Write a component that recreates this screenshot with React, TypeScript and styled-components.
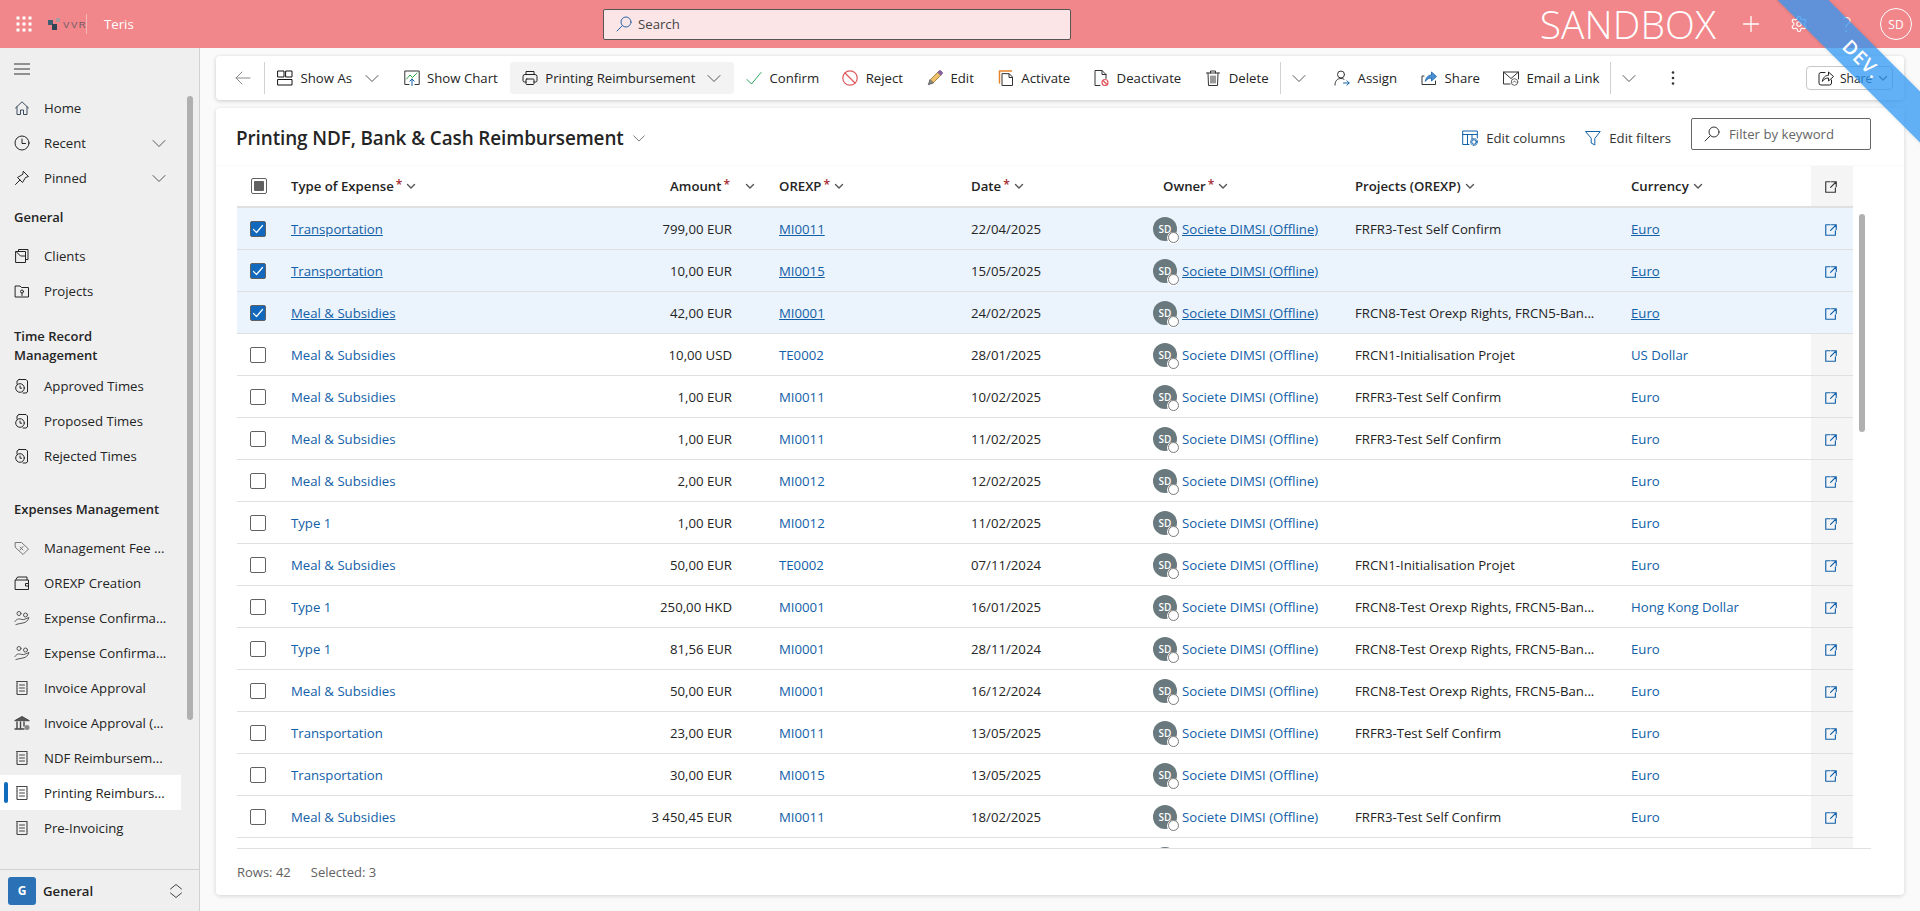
import React from "react";
import styled, { createGlobalStyle } from "styled-components";

const FONT = `"Open Sans", "Noto Sans", "Liberation Sans", sans-serif`;
const COLS = "43px 296px 191px 192px 192px 193px 276px 191px 42px";
const LINK = "#1160a8";

const Global = createGlobalStyle`
  html, body { margin: 0; height: 100%; overflow: hidden; }
  body { font-family: ${FONT}; font-size: 13.2px; color: #242424; background: #fafafa; }
  #root { height: 100%; }
  * { box-sizing: border-box; }
`;

const Page = styled.div`
  position: relative;
  height: 911px;
  display: grid;
  grid-template-rows: 48px 1fr;
  overflow: hidden;
`;

/* ---------- top bar ---------- */
const TopBar = styled.header`
  background: #f1878a;
  display: flex;
  align-items: center;
  color: #fff;
  padding-left: 16px;
`;
const LogoBox = styled.div`
  display: flex;
  align-items: center;
  height: 20px;
  width: 39px;
  margin-left: 16px;
  border-right: 1px solid #f6b5b6;
`;
const LogoText = styled.span`
  font-size: 9.5px;
  letter-spacing: 1.6px;
  color: #6f5a68;
  font-family: "Liberation Sans", sans-serif;
  margin-left: 1px;
`;
const AppName = styled.span`
  margin-left: 17px;
  font-size: 13.2px;
  width: 499px;
`;
const SearchBox = styled.div`
  width: 468px;
  height: 31px;
  background: #fbe5e6;
  border: 1px solid #555;
  border-radius: 2px;
  display: flex;
  align-items: center;
  padding-left: 12px;
  gap: 6px;
  color: #444;
`;
const SandboxLabel = styled.span`
  margin-left: auto;
  font-size: 39px;
  font-weight: 300;
  line-height: 48px;
  letter-spacing: 0.1px;
`;
const TopIconSlot = styled.div<{ $first?: boolean }>`
  width: 48px;
  display: flex;
  justify-content: center;
  align-items: center;
  font-size: 20px;
  font-weight: 300;
  margin-left: ${(p) => (p.$first ? 11 : 0)}px;
`;
const UserBadge = styled.div`
  width: 32px;
  height: 32px;
  border: 1px solid #fff;
  border-radius: 50%;
  display: flex;
  align-items: center;
  justify-content: center;
  font-size: 12px;
  margin: 0 8px 0 9px;
`;

/* ---------- ribbon ---------- */
const RibbonClip = styled.div`
  position: absolute;
  top: 0;
  right: 0;
  width: 200px;
  height: 150px;
  overflow: hidden;
  pointer-events: none;
`;
const Ribbon = styled.div`
  position: absolute;
  left: -8px;
  top: 40.5px;
  width: 300px;
  height: 36px;
  transform: rotate(45deg);
  background: rgba(45, 150, 241, 0.75);
  color: #fff;
  font-size: 19px;
  font-weight: 600;
  line-height: 36px;
  text-align: center;
  letter-spacing: 1px;
  box-shadow: 0 0 4px rgba(0, 0, 0, 0.12);
`;

/* ---------- sidebar ---------- */
const Shell = styled.div`
  display: grid;
  grid-template-columns: 200px 1fr;
  min-height: 0;
`;
const Side = styled.aside`
  position: relative;
  background: #efefef;
  border-right: 1px solid #d1d1d1;
  display: flex;
  flex-direction: column;
  overflow: hidden;
`;
const SideNav = styled.nav`
  flex: 1;
  display: flex;
  flex-direction: column;
`;
const BurgerRow = styled.div`
  height: 42px;
  display: flex;
  align-items: center;
  padding-left: 14px;
`;
const SideItem = styled.div<{ $active?: boolean }>`
  position: relative;
  height: 35px;
  width: 181px;
  flex: none;
  display: flex;
  align-items: center;
  padding: 0 14px;
  background: ${(p) => (p.$active ? "#fff" : "transparent")};
  white-space: nowrap;
  &::before {
    content: "";
    display: ${(p) => (p.$active ? "block" : "none")};
    position: absolute;
    left: 4px;
    top: 7px;
    width: 4px;
    height: 21px;
    border-radius: 2px;
    background: #0f6cbd;
  }
`;
const SideLabel = styled.span`
  margin-left: 14px;
  flex: 1;
`;
const SectionTitle = styled.div<{ $top: number; $bottom: number }>`
  padding: ${(p) => p.$top}px 30px ${(p) => p.$bottom}px 14px;
  font-weight: 600;
  line-height: 19px;
  font-size: 13px;
`;
const SideScroll = styled.div`
  position: absolute;
  left: 187px;
  top: 48px;
  width: 6px;
  height: 624px;
  border-radius: 3px;
  background: #b0b0b0;
`;
const AreaSwitch = styled.div`
  height: 42px;
  border-top: 1px solid #d1d1d1;
  display: flex;
  align-items: center;
  padding: 0 15px 0 8px;
  font-weight: 600;
`;
const AreaTile = styled.div`
  width: 28px;
  height: 28px;
  border-radius: 3px;
  background: #2a72b5;
  color: #fff;
  font-size: 12px;
  font-weight: 700;
  display: flex;
  align-items: center;
  justify-content: center;
  margin-right: 7px;
`;
const AreaLabel = styled.span`
  flex: 1;
`;

/* ---------- main ---------- */
const Main = styled.main`
  padding: 8px 16px 16px;
  display: flex;
  flex-direction: column;
  gap: 8px;
  min-height: 0;
`;
const Toolbar = styled.div`
  height: 44px;
  flex: none;
  background: #fff;
  border-radius: 4px;
  box-shadow: 0 1px 4px rgba(0, 0, 0, 0.2);
  display: flex;
  align-items: center;
  padding: 0 11px;
`;
const ToolBtn = styled.div<{ $pressed?: boolean; $pad?: number; $padRight?: number }>`
  height: 32px;
  display: flex;
  align-items: center;
  gap: 7.5px;
  padding: 0 ${(p) => p.$padRight ?? p.$pad ?? 12}px 0 ${(p) => p.$pad ?? 12}px;
  border-radius: 4px;
  white-space: nowrap;
  background: ${(p) => (p.$pressed ? "#f3f3f3" : "transparent")};
`;
const TrailChevron = styled.span<{ $gap: number }>`
  margin-left: ${(p) => p.$gap}px;
  display: flex;
`;
const ToolSep = styled.div`
  width: 1px;
  height: 32px;
  background: #d1d1d1;
  flex: none;
`;
const ShareBox = styled.div`
  margin-left: auto;
  height: 24px;
  width: 87px;
  border: 1px solid #c8c8c8;
  border-radius: 4px;
  display: flex;
  align-items: center;
  gap: 6px;
  padding-left: 11px;
  font-size: 12px;
`;

const Card = styled.section`
  position: relative;
  flex: 1;
  min-height: 0;
  background: #fff;
  border-radius: 4px;
  box-shadow: 0 1px 4px rgba(0, 0, 0, 0.16);
  display: flex;
  flex-direction: column;
`;
const CardHead = styled.div`
  height: 58px;
  flex: none;
  display: flex;
  align-items: center;
  padding: 2px 33px 0 20px;
  border-bottom: 1px solid #fafafa;
`;
const Title = styled.h1`
  margin: 1px 8px 0 0;
  font-size: 18.9px;
  font-weight: 600;
  letter-spacing: -0.1px;
`;
const HeadAction = styled.div`
  display: flex;
  align-items: center;
  gap: 8px;
  margin-right: 20px;
  white-space: nowrap;
  color: #333;
`;
const FilterBox = styled.div`
  width: 180px;
  height: 32px;
  border: 1px solid #666;
  border-radius: 2px;
  display: flex;
  align-items: center;
  gap: 9px;
  padding-left: 12px;
  color: #666;
  margin-bottom: 7px;
  white-space: nowrap;
`;
const Actions = styled.div`
  margin-left: auto;
  display: flex;
  align-items: center;
`;
const TableWrap = styled.div`
  flex: 1;
  min-height: 0;
  margin: 0 33px 0 21px;
  overflow: hidden;
  border-bottom: 1px solid #e0e0e0;
`;
const HeadRow = styled.div`
  display: grid;
  grid-template-columns: ${COLS};
  height: 42px;
  width: 1616px;
  border-bottom: 2px solid #e0e0e0;
  font-weight: 600;
`;
const Row = styled.div<{ $sel?: boolean }>`
  display: grid;
  grid-template-columns: ${COLS};
  height: 42px;
  width: 1616px;
  border-bottom: 1px solid #e0e0e0;
  background: ${(p) => (p.$sel ? "#ebf3fc" : "#fff")};
`;
const Cell = styled.div<{ $pad?: number; $right?: boolean; $gray?: boolean }>`
  display: flex;
  align-items: center;
  min-width: 0;
  white-space: nowrap;
  padding-left: ${(p) => p.$pad ?? 12}px;
  justify-content: ${(p) => (p.$right ? "flex-end" : "flex-start")};
  padding-right: ${(p) => (p.$right ? 35 : 0)}px;
  background: ${(p) => (p.$gray ? "#f5f5f5" : "transparent")};
`;
const OpenCell = styled(Cell)`
  padding-top: 2px;
`;
const Star = styled.span`
  color: #a4262c;
  margin: 0 4px 0 2px;
  font-size: 12px;
  position: relative;
  top: -2px;
`;
const AmountHead = styled.span`
  margin-right: -23px;
  display: flex;
  align-items: center;
`;
const SortGap = styled.span<{ $gap: number }>`
  margin-left: ${(p) => p.$gap}px;
  display: flex;
`;
const Link = styled.a<{ $sel?: boolean }>`
  color: ${LINK};
  text-decoration: ${(p) => (p.$sel ? "underline" : "none")};
`;
const Box = styled.div<{ $checked?: boolean }>`
  width: 16px;
  height: 16px;
  border-radius: 2px;
  border: 1px solid #616161;
  background: ${(p) => (p.$checked ? "#1168bc" : "#fff")};
  display: flex;
  align-items: center;
  justify-content: center;
`;
const MixedMark = styled.div`
  width: 10px;
  height: 10px;
  border-radius: 1px;
  background: #616161;
`;
const Avatar = styled.div`
  position: relative;
  width: 24px;
  height: 24px;
  border-radius: 50%;
  background: #69797e;
  color: #fff;
  font-size: 10px;
  font-weight: 600;
  display: flex;
  align-items: center;
  justify-content: center;
  margin-right: 5px;
  flex: none;
`;
const Presence = styled.div`
  position: absolute;
  right: -2px;
  bottom: -3px;
  width: 12px;
  height: 12px;
  border-radius: 50%;
  background: #fff;
  display: flex;
  align-items: center;
  justify-content: center;
  &::after {
    content: "";
    width: 9px;
    height: 9px;
    border-radius: 50%;
    border: 1px solid #7a7a7a;
  }
`;
const CardFoot = styled.div`
  height: 46px;
  flex: none;
  display: flex;
  align-items: center;
  padding-left: 21px;
  gap: 20px;
  color: #616161;
  font-size: 13px;
`;
const TableScroll = styled.div`
  position: absolute;
  left: 1643px;
  top: 106px;
  width: 6px;
  height: 218px;
  border-radius: 3px;
  background: #b0b0b0;
`;

/* ---------- icons ---------- */
const Svg = styled.svg<{ $s?: number }>`
  width: ${(p) => p.$s ?? 16}px;
  height: ${(p) => p.$s ?? 16}px;
  flex: none;
  fill: none;
  stroke: currentColor;
  stroke-width: 1;
  stroke-linecap: round;
  stroke-linejoin: round;
  display: block;
`;
type IP = { s?: number; c?: string; children?: React.ReactNode };
const Ic = ({ s = 16, c, children }: IP) => (
  <Svg $s={s} viewBox="0 0 16 16" style={c ? { color: c } : undefined}>
    {children}
  </Svg>
);
const Chevron = ({ s = 16, c = "#555" }: { s?: number; c?: string }) => (
  <Ic s={s} c={c}>
    <path d="M2 5.5 8 11.5 14 5.5" />
  </Ic>
);
const SmallChevron = () => (
  <Svg $s={10} viewBox="0 0 10 10" style={{ color: "#555", strokeWidth: 1.4 }}>
    <path d="M1.5 3.5 5 7 8.5 3.5" />
  </Svg>
);
const OpenIcon = ({ c = LINK }: { c?: string }) => (
  <Ic s={14} c={c}>
    <path d="M7 2H2v12h11V9" strokeWidth="1.3" />
    <path d="M8.5 2H14v5.5M14 2 7.5 8.5" strokeWidth="1.3" />
  </Ic>
);
const SearchGlyph = ({ c }: { c: string }) => (
  <Ic s={16} c={c}>
    <circle cx="10" cy="6" r="5" />
    <path d="M6.4 9.6 1 15" />
  </Ic>
);
const Waffle = () => (
  <Svg $s={16} viewBox="0 0 16 16" style={{ fill: "#fff", stroke: "none" }}>
    {[0, 6, 12].flatMap((y) =>
      [0, 6, 12].map((x) => <rect key={`${x}-${y}`} x={x + 0.5} y={y + 0.5} width="3" height="3" />)
    )}
  </Svg>
);
const LogoMark = () => (
  <Svg $s={14} viewBox="0 0 14 14" style={{ stroke: "none" }}>
    <rect x="0" y="3" width="5" height="5" fill="#3f5f74" />
    <rect x="4" y="7" width="5" height="6" fill="#2f4454" />
    <rect x="8" y="1" width="4" height="4" fill="#a89a9e" />
  </Svg>
);
const Home = () => (
  <Ic c="#3a4a5c"><path d="M1.5 8 8 1.8 14.5 8M3 6.8V14.5h3.5V10h3v4.5H13V6.8" /></Ic>
);
const Clock = () => (
  <Ic><circle cx="8" cy="8" r="7" /><path d="M8 4v4.5h3.5" /></Ic>
);
const Pin = () => (
  <Ic><path d="M9.5 1.5 14.5 6.5 11.5 7.5 8.5 12.5 3.5 7.5 8.5 4.5ZM6 10 1.5 14.5" /></Ic>
);
const Clients = () => (
  <Ic><path d="M2 3.5h9.5v11H2zM4.5 3.5v-2h9.5v10h-2.5M2 3.5l4.5 4.5h5" /></Ic>
);
const Folder = () => (
  <Ic><path d="M1.5 3h4.5l1.5 1.5h7V14h-13z" /><circle cx="8" cy="8.5" r="1.5" /><path d="M8 10v2.5" /></Ic>
);
const TimeDoc = () => (
  <Ic>
    <path d="M5 1.5h7l1.5 1.5v11l-1.5 1H9M3 6V3l2-1.5" />
    <circle cx="6" cy="10" r="4.3" />
    <path d="M6 8v2.2h1.6" />
  </Ic>
);
const Tag = () => (
  <Ic c="#777">
    <path d="M1.5 2.5h6l7 6.5-5.5 5.5-7.5-7z" />
    <path d="M6 7l3 3M9 6.5 6 10" />
  </Ic>
);
const Wallet = () => (
  <Ic>
    <path d="M2 4.5 3.5 2h9.5v3M1.5 5h13v9.5h-13z" />
    <path d="M14.5 8.5h-3v2.5h3" />
  </Ic>
);
const Hands = () => (
  <Ic c="#555">
    <circle cx="5" cy="3.5" r="2" />
    <circle cx="11.5" cy="5" r="2" />
    <path d="M1 11.5c2-3.5 5-2.5 7-2 2 .5 4-1 7-2-1 3-3 5-6 5.5-3 .5-5 1-7 1.5" />
  </Ic>
);
const Receipt = () => (
  <Ic c="#444">
    <path d="M3 1.5h10v13H3z" strokeDasharray="1.4 .3" />
    <path d="M5.5 5h5M5.5 8h5M5.5 11h5" />
  </Ic>
);
const Bank = () => (
  <Ic c="#444">
    <path d="M1 5.5 8 1.5 15 5.5z" fill="#555" />
    <path d="M3 7v6M6.5 7v6M10 7v4M1 14h9" strokeWidth="1.4" />
    <circle cx="13" cy="12.5" r="2.5" fill="#888" stroke="none" />
  </Ic>
);

const IconShowAs = () => (
  <Ic c="#111">
    <rect x="1" y="1" width="6" height="6" />
    <rect x="9" y="1" width="6" height="6" />
    <rect x="1" y="9.5" width="14" height="5.5" />
  </Ic>
);
const IconChart = () => (
  <Ic c="#333">
    <path d="M5 14.5H.8V1h14.4v13.5H11" />
    <path d="M2.5 9 6 5l2.5 2.5L13 3" stroke="#2ca34a" />
    <path d="M8 15.5V9M5.8 11.2 8 9l2.2 2.2" stroke="#1160a8" />
  </Ic>
);
const IconPrint = () => (
  <Ic c="#222">
    <path d="M4 4.5V1.5h8v3M4 12H2.5A1.5 1.5 0 0 1 1 10.5v-4A2 2 0 0 1 3 4.5h10a2 2 0 0 1 2 2v4a1.5 1.5 0 0 1-1.5 1.5H12" />
    <rect x="4" y="9" width="8" height="5.5" rx=".8" />
  </Ic>
);
const IconCheck = () => (
  <Ic c="#2fa35c"><path d="M1 9.5 5.5 14 15 2.5" /></Ic>
);
const IconReject = () => (
  <Ic c="#e2585c">
    <circle cx="8" cy="8" r="7.2" strokeWidth="1.2" />
    <path d="M3 3l10 10" strokeWidth="1.2" />
  </Ic>
);
const IconEdit = () => (
  <Ic c="#777">
    <path d="M3 10 11 2l3 3-8 8z" fill="#eec16a" stroke="#a98a4a" />
    <path d="M11 2l1.3-1.2a1 1 0 0 1 1.4 0l1.5 1.5a1 1 0 0 1 0 1.4L14 5z" fill="#8a63a8" stroke="#7a5a98" />
    <path d="M3 10l-1.7 4.7L6 13z" fill="#888" stroke="#666" />
  </Ic>
);
const IconActivate = () => (
  <Ic c="#333">
    <path d="M1.5 13V1h12" stroke="#e8822a" strokeWidth="1.5" />
    <path d="M4 4v11.5h10.5V7l-3-3zM11 4v3.5h3.5" />
  </Ic>
);
const IconDeactivate = () => (
  <Ic c="#333">
    <path d="M7 15.5H2V.5h7l4 4v4M9 .5v4h4" />
    <circle cx="12" cy="12.5" r="3" stroke="#e2585c" strokeWidth="1.2" />
    <path d="M10 10.5l4 4" stroke="#e2585c" strokeWidth="1.2" />
  </Ic>
);
const IconTrash = () => (
  <Ic c="#333">
    <path d="M1.5 3h13M5.5 3V1h5v2M3 3l.5 12.5h9L13 3M6 6v7M8 6v7M10 6v7" />
  </Ic>
);
const IconAssign = () => (
  <Ic c="#333">
    <circle cx="7" cy="4.5" r="3.5" />
    <path d="M1 15c0-4 2-6.5 6-6.5 1.2 0 2.2.2 3 .7" />
    <path d="M9.5 13H15M13 10.8 15.2 13 13 15.2" stroke="#1160a8" />
  </Ic>
);
const IconShare = () => (
  <Ic c="#333">
    <path d="M3 6H1v8.5h13.5V11" />
    <path d="M4.5 11c.3-3.5 3-6 6-6V2L15.5 6.5 10.5 11V8C8 8 6 9 4.5 11Z" fill="#4a90d4" stroke="#2f74b5" />
  </Ic>
);
const IconMail = () => (
  <Ic c="#333">
    <path d="M7 14H.5V2h15v7M.5 2 8 8.5 15.5 2" />
    <circle cx="11.5" cy="12" r="3.3" stroke="#666" />
    <path d="M10 12.3c1-1.5 2-1.5 3 0" stroke="#666" />
  </Ic>
);
const IconShareOutline = () => (
  <Ic c="#222">
    <path d="M7 2.5H3a2 2 0 0 0-2 2V13a2 2 0 0 0 2 2h8.5a2 2 0 0 0 2-2v-3" />
    <path d="M4.5 11c.4-3.5 3-5.7 6-5.7V2L15.5 6.5 10.5 11V8C8 8 6 9 4.5 11Z" />
  </Ic>
);
const ColumnsIcon = () => (
  <Ic c="#1160a8">
    <path d="M7 14.5H.7V1h14.6v7M.7 4.5h14.6M5.5 4.5v10M10 4.5V9" />
    <circle cx="12" cy="12" r="2.3" />
    <circle cx="12" cy="12" r="3.4" strokeDasharray="1.2 1.2" />
  </Ic>
);
const FunnelIcon = () => (
  <Ic c="#1160a8"><path d="M.8 1.5h14.4L9.8 8.5v6.5L6.2 13V8.5z" /></Ic>
);
const CheckMark = () => (
  <Svg $s={12} viewBox="0 0 12 12" style={{ color: "#fff", strokeWidth: 1.2 }}>
    <path d="M1.5 6.5 4.5 9.5 10.5 2.5" />
  </Svg>
);
const UpDown = () => (
  <Ic c="#444" s={16}>
    <path d="M2.5 6 8 1.5 13.5 6M2.5 10 8 14.5 13.5 10" />
  </Ic>
);

/* ---------- data ---------- */
type Rec = { t: string; a: string; o: string; d: string; p: string; c?: string; sel?: boolean };
const F3 = "FRFR3-Test Self Confirm";
const F8 = "FRCN8-Test Orexp Rights, FRCN5-Ban...";
const F1 = "FRCN1-Initialisation Projet";
const TR = "Transportation";
const MS = "Meal & Subsidies";
const rows: Rec[] = [
  { t: TR, a: "799,00 EUR", o: "MI0011", d: "22/04/2025", p: F3, sel: true },
  { t: TR, a: "10,00 EUR", o: "MI0015", d: "15/05/2025", p: "", sel: true },
  { t: MS, a: "42,00 EUR", o: "MI0001", d: "24/02/2025", p: F8, sel: true },
  { t: MS, a: "10,00 USD", o: "TE0002", d: "28/01/2025", p: F1, c: "US Dollar" },
  { t: MS, a: "1,00 EUR", o: "MI0011", d: "10/02/2025", p: F3 },
  { t: MS, a: "1,00 EUR", o: "MI0011", d: "11/02/2025", p: F3 },
  { t: MS, a: "2,00 EUR", o: "MI0012", d: "12/02/2025", p: "" },
  { t: "Type 1", a: "1,00 EUR", o: "MI0012", d: "11/02/2025", p: "" },
  { t: MS, a: "50,00 EUR", o: "TE0002", d: "07/11/2024", p: F1 },
  { t: "Type 1", a: "250,00 HKD", o: "MI0001", d: "16/01/2025", p: F8, c: "Hong Kong Dollar" },
  { t: "Type 1", a: "81,56 EUR", o: "MI0001", d: "28/11/2024", p: F8 },
  { t: MS, a: "50,00 EUR", o: "MI0001", d: "16/12/2024", p: F8 },
  { t: TR, a: "23,00 EUR", o: "MI0011", d: "13/05/2025", p: F3 },
  { t: TR, a: "30,00 EUR", o: "MI0015", d: "13/05/2025", p: "" },
  { t: MS, a: "3 450,45 EUR", o: "MI0011", d: "18/02/2025", p: F3 },
];

const Req = () => <Star>*</Star>;

export default function App() {
  return (
    <Page>
      <Global />
      <TopBar>
        <Waffle />
        <LogoBox>
          <LogoMark />
          <LogoText>VVR</LogoText>
        </LogoBox>
        <AppName>Teris</AppName>
        <SearchBox>
          <SearchGlyph c="#2a64a8" />
          Search
        </SearchBox>
        <SandboxLabel>SANDBOX</SandboxLabel>
        <TopIconSlot $first>
          <Ic s={16} c="#fff"><path d="M8 .5v15M.5 8h15" strokeWidth="1.3" /></Ic>
        </TopIconSlot>
        <TopIconSlot>
          <Svg $s={18} viewBox="0 0 24 24" style={{ color: "#fff", strokeWidth: 1.5 }}>
            <path d="M12.22 2h-.44a2 2 0 0 0-2 2v.18a2 2 0 0 1-1 1.73l-.43.25a2 2 0 0 1-2 0l-.15-.08a2 2 0 0 0-2.73.73l-.22.38a2 2 0 0 0 .73 2.73l.15.1a2 2 0 0 1 1 1.72v.51a2 2 0 0 1-1 1.74l-.15.09a2 2 0 0 0-.73 2.73l.22.38a2 2 0 0 0 2.73.73l.15-.08a2 2 0 0 1 2 0l.43.25a2 2 0 0 1 1 1.73V20a2 2 0 0 0 2 2h.44a2 2 0 0 0 2-2v-.18a2 2 0 0 1 1-1.73l.43-.25a2 2 0 0 1 2 0l.15.08a2 2 0 0 0 2.73-.73l.22-.39a2 2 0 0 0-.73-2.73l-.15-.08a2 2 0 0 1-1-1.74v-.5a2 2 0 0 1 1-1.74l.15-.09a2 2 0 0 0 .73-2.73l-.22-.38a2 2 0 0 0-2.73-.73l-.15.08a2 2 0 0 1-2 0l-.43-.25a2 2 0 0 1-1-1.73V4a2 2 0 0 0-2-2z" />
            <circle cx="12" cy="12" r="3" />
          </Svg>
        </TopIconSlot>
        <TopIconSlot>?</TopIconSlot>
        <UserBadge>SD</UserBadge>
      </TopBar>

      <Shell>
        <Side>
          <SideNav>
            <BurgerRow>
              <Ic c="#333"><path d="M0 3h16M0 8h16M0 13h16" /></Ic>
            </BurgerRow>
            <SideItem><Home /><SideLabel>Home</SideLabel></SideItem>
            <SideItem><Clock /><SideLabel>Recent</SideLabel><Chevron /></SideItem>
            <SideItem><Pin /><SideLabel>Pinned</SideLabel><Chevron /></SideItem>
            <SectionTitle $top={13} $bottom={11}>General</SectionTitle>
            <SideItem><Clients /><SideLabel>Clients</SideLabel></SideItem>
            <SideItem><Folder /><SideLabel>Projects</SideLabel></SideItem>
            <SectionTitle $top={19} $bottom={3}>Time Record Management</SectionTitle>
            <SideItem><TimeDoc /><SideLabel>Approved Times</SideLabel></SideItem>
            <SideItem><TimeDoc /><SideLabel>Proposed Times</SideLabel></SideItem>
            <SideItem><TimeDoc /><SideLabel>Rejected Times</SideLabel></SideItem>
            <SectionTitle $top={27} $bottom={11}>Expenses Management</SectionTitle>
            <SideItem><Tag /><SideLabel>Management Fee ...</SideLabel></SideItem>
            <SideItem><Wallet /><SideLabel>OREXP Creation</SideLabel></SideItem>
            <SideItem><Hands /><SideLabel>Expense Confirma...</SideLabel></SideItem>
            <SideItem><Hands /><SideLabel>Expense Confirma...</SideLabel></SideItem>
            <SideItem><Receipt /><SideLabel>Invoice Approval</SideLabel></SideItem>
            <SideItem><Bank /><SideLabel>Invoice Approval (...</SideLabel></SideItem>
            <SideItem><Receipt /><SideLabel>NDF Reimbursem...</SideLabel></SideItem>
            <SideItem $active><Receipt /><SideLabel>Printing Reimburs...</SideLabel></SideItem>
            <SideItem><Receipt /><SideLabel>Pre-Invoicing</SideLabel></SideItem>
          </SideNav>
          <SideScroll />
          <AreaSwitch>
            <AreaTile>G</AreaTile>
            <AreaLabel>General</AreaLabel>
            <UpDown />
          </AreaSwitch>
        </Side>

        <Main>
          <Toolbar>
            <ToolBtn $pad={8} $padRight={13}>
              <Ic c="#8a8a8a"><path d="M15 8H1M7 2 1 8l6 6" /></Ic>
            </ToolBtn>
            <ToolSep />
            <ToolBtn><IconShowAs />Show As<TrailChevron $gap={4}><Chevron /></TrailChevron></ToolBtn>
            <ToolBtn><IconChart />Show Chart</ToolBtn>
            <ToolBtn $pressed><IconPrint />Printing Reimbursement<TrailChevron $gap={3}><Chevron /></TrailChevron></ToolBtn>
            <ToolBtn $padRight={11}><IconCheck />Confirm</ToolBtn>
            <ToolBtn><IconReject />Reject</ToolBtn>
            <ToolBtn><IconEdit />Edit</ToolBtn>
            <ToolBtn $padRight={11}><IconActivate />Activate</ToolBtn>
            <ToolBtn><IconDeactivate />Deactivate</ToolBtn>
            <ToolBtn $padRight={11.5}><IconTrash />Delete</ToolBtn>
            <ToolSep />
            <ToolBtn $pad={10} $padRight={15}><Chevron /></ToolBtn>
            <ToolBtn><IconAssign />Assign</ToolBtn>
            <ToolBtn><IconShare />Share</ToolBtn>
            <ToolBtn $pad={11}><IconMail />Email a Link</ToolBtn>
            <ToolSep />
            <ToolBtn $pad={10}><Chevron /></ToolBtn>
            <ToolBtn $pad={18}>
              <Svg $s={16} viewBox="0 0 16 16" style={{ fill: "#333", stroke: "none" }}>
                <circle cx="8" cy="2.5" r="1.3" /><circle cx="8" cy="8" r="1.3" /><circle cx="8" cy="13.5" r="1.3" />
              </Svg>
            </ToolBtn>
            <ShareBox><IconShareOutline />Share<SmallChevron /></ShareBox>
          </Toolbar>

          <Card>
            <CardHead>
              <Title>Printing NDF, Bank &amp; Cash Reimbursement</Title>
              <Chevron s={14} c="#666" />
              <Actions>
                <HeadAction><ColumnsIcon />Edit columns</HeadAction>
                <HeadAction><FunnelIcon />Edit filters</HeadAction>
                <FilterBox><SearchGlyph c="#333" />Filter by keyword</FilterBox>
              </Actions>
            </CardHead>
            <TableWrap>
              <HeadRow>
                <Cell $pad={14}><Box><MixedMark /></Box></Cell>
                <Cell $pad={11}>Type of Expense<Req /><SmallChevron /></Cell>
                <Cell $right $pad={0}>
                  <AmountHead>Amount<Req /><SortGap $gap={11}><SmallChevron /></SortGap></AmountHead>
                </Cell>
                <Cell>OREXP<Req /><SmallChevron /></Cell>
                <Cell>Date<Req /><SmallChevron /></Cell>
                <Cell>Owner<Req /><SmallChevron /></Cell>
                <Cell $pad={11}>Projects (OREXP)<SortGap $gap={4}><SmallChevron /></SortGap></Cell>
                <Cell $pad={11}>Currency<SortGap $gap={4}><SmallChevron /></SortGap></Cell>
                <OpenCell $pad={13} $gray><OpenIcon c="#333" /></OpenCell>
              </HeadRow>
              {rows.map((r, i) => (
                <Row key={i} $sel={r.sel}>
                  <Cell $pad={13}><Box $checked={r.sel}>{r.sel && <CheckMark />}</Box></Cell>
                  <Cell $pad={11}><Link $sel={r.sel}>{r.t}</Link></Cell>
                  <Cell $right $pad={0}>{r.a}</Cell>
                  <Cell><Link $sel={r.sel}>{r.o}</Link></Cell>
                  <Cell>{r.d}</Cell>
                  <Cell $pad={2}>
                    <Avatar>SD<Presence /></Avatar>
                    <Link $sel={r.sel}>Societe DIMSI (Offline)</Link>
                  </Cell>
                  <Cell $pad={11}>{r.p}</Cell>
                  <Cell $pad={11}><Link $sel={r.sel}>{r.c ?? "Euro"}</Link></Cell>
                  <OpenCell $pad={13} $gray={!r.sel}><OpenIcon /></OpenCell>
                </Row>
              ))}
              <Row>
                <Cell />
                <Cell />
                <Cell />
                <Cell />
                <Cell />
                <Cell $pad={2}><Avatar /></Cell>
                <Cell />
                <Cell />
                <Cell $gray />
              </Row>
            </TableWrap>
            <TableScroll />
            <CardFoot>
              <span>Rows: 42</span>
              <span>Selected: 3</span>
            </CardFoot>
          </Card>
        </Main>
      </Shell>

      <RibbonClip>
        <Ribbon>DEV.</Ribbon>
      </RibbonClip>
    </Page>
  );
}
